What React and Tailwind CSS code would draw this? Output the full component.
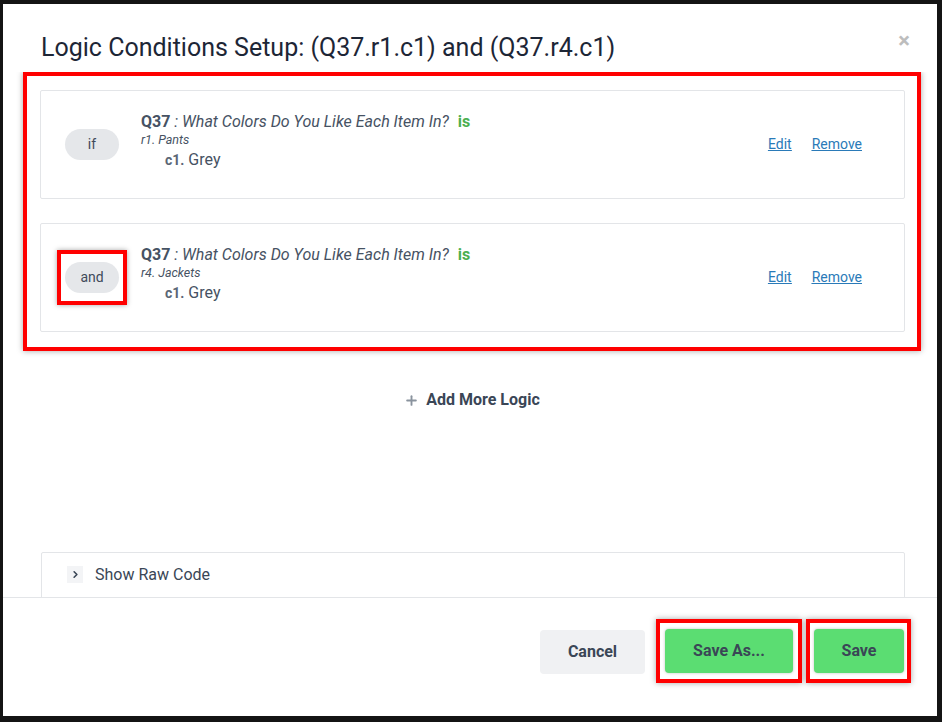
import React from 'react';
import { Plus, ChevronRight } from 'lucide-react';

const conditions = [
    { id: 1, joiner: 'if', row: 'r1. Pants', highlight: false },
    { id: 2, joiner: 'and', row: 'r4. Jackets', highlight: true },
];

const Pill = ({ label }) => (
    <div className="w-[54px] h-[31px] rounded-full bg-[#e5e7ea] flex items-center justify-center text-[14px] text-[#3f4a5a]">
        {label}
    </div>
);

const ConditionCard = ({ cond }) => (
    <div className="h-[109px] border border-[#e3e5e8] rounded-[2px] bg-white flex items-center pl-[24px] pr-[42px]">
        <div className="w-[54px] flex justify-center">
            {cond.highlight ? (
                <div className="border-[4px] border-[#ff0000] px-[4px] py-[8px] -mx-[8px] -my-[12px] shadow-[0_0_5px_rgba(0,0,0,0.35)]">
                    <Pill label={cond.joiner} />
                </div>
            ) : (
                <Pill label={cond.joiner} />
            )}
        </div>
        <div className="ml-[22px] flex-1 -mt-[7px]">
            <div className="text-[16px] leading-[20px] text-[#465263]">
                <span className="font-bold">Q37</span>
                <span className="italic"> : What Colors Do You Like Each Item In?</span>
                <span className="font-bold text-[#4caf50] ml-[9px]">is</span>
            </div>
            <div className="text-[12.5px] leading-[16px] italic text-[#465263]">{cond.row}</div>
            <div className="ml-[24px] mt-[2px] text-[16px] leading-[20px] text-[#465263]">
                <span className="font-bold text-[14px] text-[#5b6675]">c1.</span> Grey
            </div>
        </div>
        <div className="flex gap-[20px] text-[14px] text-[#2a7ab8] underline">
            <a href="#">Edit</a>
            <a href="#">Remove</a>
        </div>
    </div>
);

const App = () => {
    return (
        <div className="w-[942px] h-[722px] bg-[#141414] pt-[4px] pl-[3px] pr-[5px] pb-[6px]" style={{ fontFamily: 'Roboto, "Liberation Sans", sans-serif' }}>
            <div className="w-full h-full bg-white flex flex-col">
                {/* header */}
                <div className="h-[68px] shrink-0 flex items-start pl-[38px] pr-[27px] pt-[28px]">
                    <h2 className="flex-1 text-[25px] leading-[32px] text-[#1d2636]">
                        Logic Conditions Setup: (Q37.r1.c1) and (Q37.r4.c1)
                    </h2>
                    <span className="text-[#bdbdbd] text-[22px] leading-[22px] mt-[-2px] font-bold">×</span>
                </div>

                {/* body */}
                <div className="flex-1 overflow-hidden flex flex-col">
                    <div className="ml-[20px] w-[898px] border-[4px] border-[#ff0000] shadow-[0_0_6px_rgba(0,0,0,0.35)] pt-[14px] pb-[15px] pl-[13px] pr-[12px] flex flex-col gap-[24px]">
                        {conditions.map(c => (
                            <ConditionCard key={c.id} cond={c} />
                        ))}
                    </div>

                    <button className="mt-[37px] self-center flex items-center gap-[7px] text-[16px] leading-[24px] font-bold text-[#3a4656] ml-[4px]">
                        <Plus className="w-[15px] h-[15px] text-[#8a939e]" strokeWidth={3} />
                        Add More Logic
                    </button>

                    <div className="mt-[140px] ml-[38px] w-[864px] h-[60px] border border-[#e3e5e8] rounded-[2px] flex items-start pt-[13px] pl-[25px] shrink-0">
                        <div className="w-[16px] h-[17px] bg-[#f3f4f6] flex items-center justify-center">
                            <ChevronRight className="w-[11px] h-[11px] text-[#3a4656]" strokeWidth={3.5} />
                        </div>
                        <span className="ml-[12px] text-[16px] leading-[18px] text-[#3a4656]">Show Raw Code</span>
                    </div>
                </div>

                {/* footer */}
                <div className="h-[119px] shrink-0 border-t border-[#e3e5e8] flex justify-end items-start pt-[21px] pr-[26px]">
                    <button className="mt-[11px] w-[105px] h-[44px] rounded-[4px] bg-[#f0f1f3] text-[16px] font-bold text-[#3a4656]">
                        Cancel
                    </button>
                    <div className="ml-[11px] border-[4px] border-[#ff0000] px-[5px] py-[6px] shadow-[0_0_6px_rgba(0,0,0,0.35)]">
                        <button className="w-[128px] h-[44px] rounded-[4px] bg-[#5bdd72] text-[16px] font-bold text-[#3a4656] shadow-[0_0_3px_rgba(0,0,0,0.25)]">
                            Save As...
                        </button>
                    </div>
                    <div className="ml-[4px] border-[4px] border-[#ff0000] pl-[4px] pr-[3px] py-[6px] shadow-[0_0_6px_rgba(0,0,0,0.35)]">
                        <button className="w-[90px] h-[44px] rounded-[4px] bg-[#5bdd72] text-[16px] font-bold text-[#3a4656] shadow-[0_0_3px_rgba(0,0,0,0.25)]">
                            Save
                        </button>
                    </div>
                </div>
            </div>
        </div>
    );
};

export default App;
